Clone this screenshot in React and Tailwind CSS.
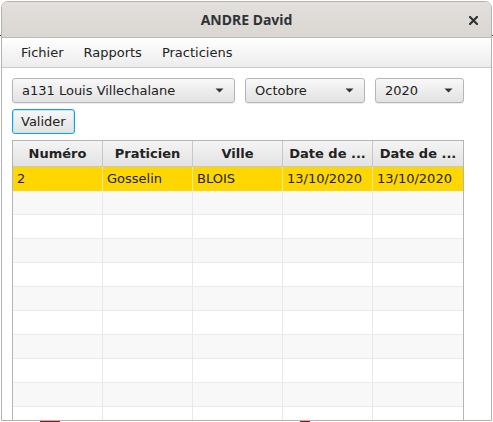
import React from "react";

const Arrow = () => (
  <svg width="9" height="5" viewBox="0 0 9 5" className="shrink-0">
    <path d="M0.5 0.5 L8.5 0.5 L4.5 4.5 Z" fill="#333" />
  </svg>
);

function Combo({ label, w }) {
  return (
    <div
      className={`${w} h-[25px] flex items-center justify-between pl-[9px] pr-[10px] rounded-[3px] border border-[#b5b5b5] bg-gradient-to-b from-[#f8f8f8] to-[#e2e2e2] shadow-[0_1px_1px_rgba(0,0,0,0.08)] text-[13px] text-[#222]`}
    >
      <span className="leading-none">{label}</span>
      <Arrow />
    </div>
  );
}

const cols = ["Numéro", "Praticien", "Ville", "Date de ...", "Date de ..."];
const first = ["2", "Gosselin", "BLOIS", "13/10/2020", "13/10/2020"];

export default function App() {
  const rows = Array.from({ length: 10 });
  return (
    <div className="relative w-[493px] h-[422px] bg-white overflow-hidden font-['DejaVu_Sans',sans-serif]">
      <div className="absolute left-0 right-0 top-[35px] h-[1px] bg-[#333]" />
      <div className="absolute left-[40px] bottom-0 w-[20px] h-[1px] bg-[#a01010]" />
      <div className="absolute left-[300px] bottom-0 w-[10px] h-[1px] bg-[#a01010]" />
      <div className="relative ml-[1px] mt-[1px] w-[491px] h-[420px] border border-[#b4b2ae] rounded-t-[7px] flex flex-col overflow-hidden bg-white">
        {/* Title bar */}
        <div className="relative h-[36px] shrink-0 flex items-center justify-center bg-gradient-to-b from-[#e2dfdc] to-[#dad7d3] border-b border-[#bdbab5]">
          <span className="font-['Noto_Sans',sans-serif] font-bold text-[14px] text-[#2e3436] leading-none">
            ANDRE David
          </span>
          <svg
            className="absolute right-[13px] top-[14px]"
            width="9"
            height="9"
            viewBox="0 0 9 9"
          >
            <path d="M1 1 L8 8 M8 1 L1 8" stroke="#2e3436" strokeWidth="2.2" strokeLinecap="square" />
          </svg>
        </div>
        {/* Menu bar */}
        <div className="h-[30px] shrink-0 flex items-center pl-[9px] bg-gradient-to-b from-[#ffffff] to-[#ececec] border-b border-[#cacaca] text-[13px] text-[#222]">
          <span className="px-[10px]">Fichier</span>
          <span className="px-[10px]">Rapports</span>
          <span className="px-[10px]">Practiciens</span>
        </div>
        {/* Content */}
        <div className="flex-1 flex flex-col pl-[10px] pt-[10px] min-h-0">
          <div className="flex items-center">
            <Combo label="a131 Louis Villechalane" w="w-[223px]" />
            <div className="w-[10px]" />
            <Combo label="Octobre" w="w-[120px]" />
            <div className="w-[10px]" />
            <Combo label="2020" w="w-[89px]" />
          </div>
          <div className="mt-[6px] flex">
            <div className="h-[25px] px-[8px] flex items-center rounded-[3px] border border-[#1e9fd6] bg-gradient-to-b from-[#f8f8f8] to-[#e2e2e2] shadow-[inset_0_0_0_1px_#bfe6f6] text-[13px] text-[#222]">
              Valider
            </div>
          </div>
          <div className="mt-[6px] w-[452px] flex-1 border border-b-0 border-[#b5b5b5] flex flex-col min-h-0">
            <div className="grid grid-cols-[90px_90px_90px_90px_90px] h-[26px] shrink-0 bg-gradient-to-b from-[#f4f4f4] to-[#e3e3e3] border-b border-[#c8c8c8]">
              {cols.map((c, i) => (
                <div
                  key={i}
                  className={`flex items-center justify-center font-bold text-[13px] text-[#222] ${i < 4 ? "border-r border-[#c8c8c8]" : ""}`}
                >
                  {c}
                </div>
              ))}
            </div>
            <div className="grid grid-cols-[90px_90px_90px_90px_90px] h-[24px] shrink-0 bg-[#ffd700]">
              {first.map((c, i) => (
                <div
                  key={i}
                  className={`flex items-center pl-[4px] text-[13px] text-[#222] ${i < 4 ? "border-r border-[#f6e6a0]" : ""}`}
                >
                  {c}
                </div>
              ))}
            </div>
            {rows.map((_, r) => (
              <div
                key={r}
                className={`grid grid-cols-[90px_90px_90px_90px_90px] h-[24px] shrink-0 border-b border-[#ebebeb] ${r % 2 === 0 ? "bg-[#f8f8f8]" : "bg-white"}`}
              >
                {cols.map((_, i) => (
                  <div key={i} className={i < 4 ? "border-r border-[#e8e8e8]" : ""} />
                ))}
              </div>
            ))}
          </div>
        </div>
      </div>
    </div>
  );
}
